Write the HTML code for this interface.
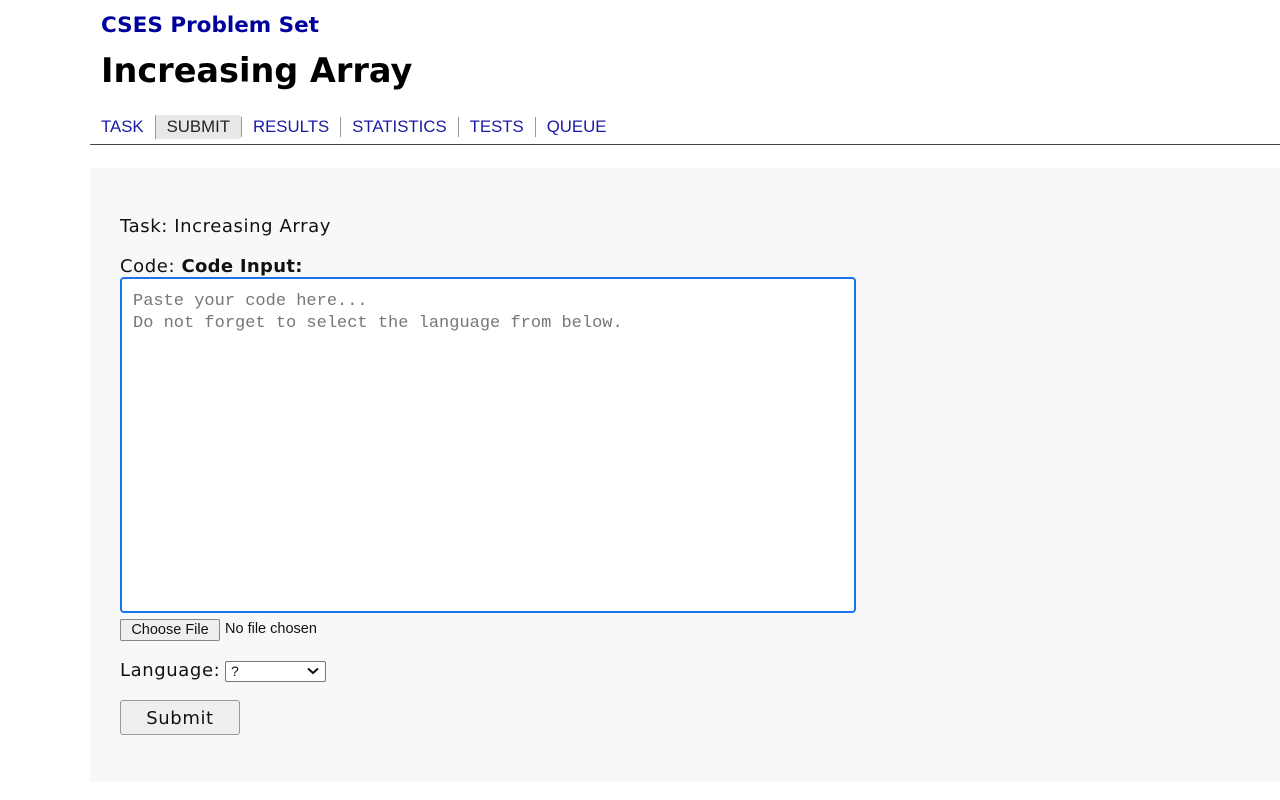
<!DOCTYPE html>
<html><head><style>
body{margin:0;width:1280px;height:800px;background:#fff;position:relative;font-family:"DejaVu Sans",Verdana,sans-serif;overflow:hidden}
.a{position:absolute;white-space:nowrap}
.nav{position:absolute;top:115px;left:101px;font-family:"Liberation Sans",Arial,sans-serif;font-size:16.8px;color:#1a1aa6;display:flex;align-items:center}
.nav span{padding:0 11px;border-left:1px solid #999;line-height:20px}
.nav span:first-child{padding-left:0;border:none}
.nav .cur{background:#e8e8e8;color:#222;padding:2px 11px;border-color:#999}
.t{font-size:18px;letter-spacing:0.6px;color:#111}
</style></head><body>
<div class="a" style="left:101px;top:13px;font-size:21.5px;font-weight:bold;color:#00009c">CSES Problem Set</div>
<div class="a" style="left:101px;top:51px;font-size:33.5px;font-weight:bold;color:#000">Increasing Array</div>
<div class="nav"><span>TASK</span><span class="cur">SUBMIT</span><span>RESULTS</span><span>STATISTICS</span><span>TESTS</span><span>QUEUE</span></div>
<div class="a" style="left:90px;top:144px;width:1190px;height:1px;background:#444"></div>
<div class="a" style="left:90px;top:168px;width:1190px;height:614px;background:#f7f8f9"></div>
<div class="a t" style="left:120px;top:216px">Task: Increasing Array</div>
<div class="a t" style="left:120px;top:256px">Code: <b style="letter-spacing:0.3px">Code Input:</b></div>
<div class="a" style="left:120px;top:277px;width:732px;height:332px;border:2px solid #1a73e8;border-radius:4px;background:#fff"></div>
<div class="a" style="left:133px;top:291px;font-family:'Liberation Mono',monospace;font-size:17px;line-height:22px;color:#777">Paste your code here...<br>Do not forget to select the language from below.</div>
<div class="a" style="left:120px;top:619px;width:98px;height:20px;border:1px solid #888;border-radius:2px;background:#efefef;font-family:'Liberation Sans',Arial,sans-serif;font-size:14.5px;line-height:20px;text-align:center;color:#111">Choose File</div>
<div class="a" style="left:225px;top:621px;font-family:'Liberation Sans',Arial,sans-serif;font-size:14.5px;color:#111">No file chosen</div>
<div class="a t" style="left:120px;top:660px">Language:</div>
<div class="a" style="left:225px;top:661px;width:99px;height:19px;border:1px solid #777;border-radius:2px;background:#fff;font-family:'Liberation Sans',Arial,sans-serif;font-size:14px;line-height:19px;color:#111"><span style="margin-left:5px">?</span>
<svg style="position:absolute;right:6px;top:5px" width="12" height="8" viewBox="0 0 12 8"><path d="M1 1.5 6 6 11 1.5" fill="none" stroke="#111" stroke-width="2"/></svg></div>
<div class="a t" style="left:120px;top:700px;width:118px;height:33px;border:1px solid #999;border-radius:3px;background:#efefef;line-height:35px;text-align:center">Submit</div>
</body></html>
